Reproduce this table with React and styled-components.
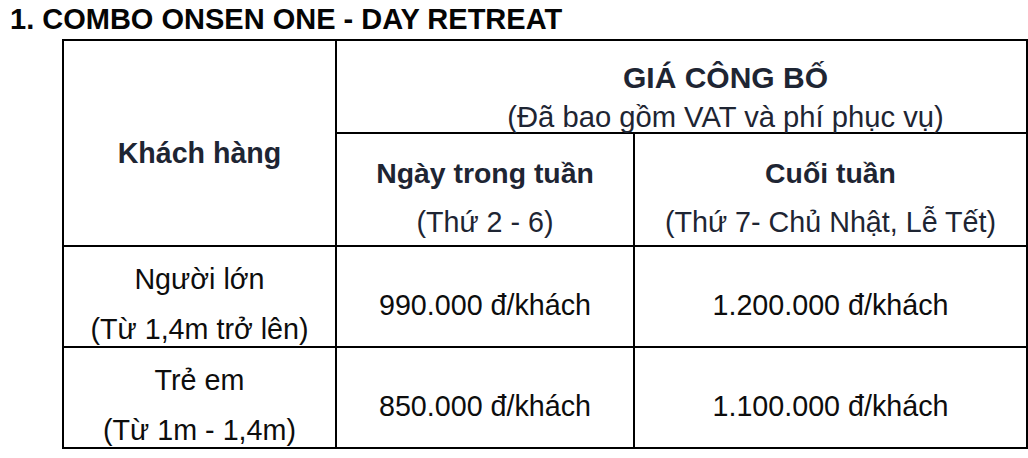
import React from "react";
import styled, { createGlobalStyle } from "styled-components";

const Global = createGlobalStyle`
  html, body { margin: 0; padding: 0; background: #ffffff; }
  body { font-family: "Liberation Sans", Arial, sans-serif; }
`;

const Page = styled.div`
  width: 1028px;
  height: 458px;
  overflow: hidden;
  background: #fff;
`;

const Title = styled.h1`
  margin: 0;
  padding-left: 10px;
  height: 39px;
  font-size: 29px;
  line-height: 39px;
  font-weight: 700;
  color: #050505;
  white-space: nowrap;
`;

const Grid = styled.div`
  margin-left: 62px;
  width: 962px;
  display: grid;
  grid-template-columns: 271px 296px 391px;
  grid-template-rows: 91px 111px 99px 99px;
  gap: 2px;
  padding: 2px;
  background: #000;
  box-sizing: content-box;
`;

const Cell = styled.div`
  background: #fff;
  display: flex;
  flex-direction: column;
  align-items: center;
  padding-top: ${(p) => p.$top}px;
  padding-left: ${(p) => p.$left || 0}px;
  gap: ${(p) => p.$gap || 0}px;
  grid-column: ${(p) => p.$col || "auto"};
  grid-row: ${(p) => p.$row || "auto"};
  box-sizing: border-box;
  overflow: visible;
`;

const Line = styled.div`
  font-size: ${(p) => p.$size || 28.7}px;
  line-height: 32px;
  height: 32px;
  white-space: nowrap;
  font-weight: ${(p) => (p.$bold ? 700 : 400)};
  color: ${(p) => (p.$head ? "#1e2533" : "#0d0d0d")};
`;

export default function App() {
  return (
    <Page>
      <Global />
      <Title>1. COMBO ONSEN ONE - DAY RETREAT</Title>
      <Grid>
        <Cell $row="span 2" $top={96}>
          <Line $bold $head $size={28.6}>Khách hàng</Line>
        </Cell>
        <Cell $col="span 2" $top={21} $gap={7} $left={88}>
          <Line $bold $head $size={30}>GIÁ CÔNG BỐ</Line>
          <Line $head $size={29.2}>(Đã bao gồm VAT và phí phục vụ)</Line>
        </Cell>
        <Cell $top={23} $gap={17}>
          <Line $bold $head $size={28.4}>Ngày trong tuần</Line>
          <Line $head>(Thứ 2 - 6)</Line>
        </Cell>
        <Cell $top={23} $gap={17}>
          <Line $bold $head $size={28.4}>Cuối tuần</Line>
          <Line $head>(Thứ 7- Chủ Nhật, Lễ Tết)</Line>
        </Cell>

        <Cell $top={16} $gap={18}>
          <Line>Người lớn</Line>
          <Line>(Từ 1,4m trở lên)</Line>
        </Cell>
        <Cell $top={42}>
          <Line>990.000 đ/khách</Line>
        </Cell>
        <Cell $top={42}>
          <Line>1.200.000 đ/khách</Line>
        </Cell>

        <Cell $top={16} $gap={18}>
          <Line>Trẻ em</Line>
          <Line>(Từ 1m - 1,4m)</Line>
        </Cell>
        <Cell $top={42}>
          <Line>850.000 đ/khách</Line>
        </Cell>
        <Cell $top={42}>
          <Line>1.100.000 đ/khách</Line>
        </Cell>
      </Grid>
    </Page>
  );
}
